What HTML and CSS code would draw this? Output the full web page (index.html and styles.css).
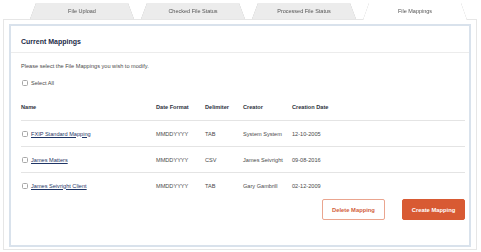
FILE: index.html
```html
<!DOCTYPE html>
<html lang="en">
<head>
    <meta charset="UTF-8">
    <meta name="viewport" content="width=device-width, initial-scale=1.0">
    <title>File Mappings</title>
    <link rel="stylesheet" href="styles.css">
</head>
<body>
    <div class="tabs">
        <div class="tab">File Upload</div>
        <div class="tab">Checked File Status</div>
        <div class="tab">Processed File Status</div>
        <div class="tab active">File Mappings</div>
    </div>
    <div class="outer">
        <div class="panel">
            <div class="panel-head">Current Mappings</div>
            <div class="panel-body">
                <p class="intro">Please select the File Mappings you wish to modify.</p>
                <label class="select-all"><input type="checkbox"> Select All</label>

                <div class="grid head">
                    <div>Name</div>
                    <div>Date Format</div>
                    <div>Delimiter</div>
                    <div>Creator</div>
                    <div>Creation Date</div>
                </div>
                <div class="grid row">
                    <div class="name"><input type="checkbox"> <a href="#">FXIP Standard Mapping</a></div>
                    <div>MMDDYYYY</div>
                    <div>TAB</div>
                    <div>System System</div>
                    <div>12-10-2005</div>
                </div>
                <div class="grid row">
                    <div class="name"><input type="checkbox"> <a href="#">James Matters</a></div>
                    <div>MMDDYYYY</div>
                    <div>CSV</div>
                    <div>James Seivright</div>
                    <div>09-08-2016</div>
                </div>
                <div class="grid row last">
                    <div class="name"><input type="checkbox"> <a href="#">James Seivright Client</a></div>
                    <div>MMDDYYYY</div>
                    <div>TAB</div>
                    <div>Gary Gambrill</div>
                    <div>02-12-2009</div>
                </div>

                <div class="actions">
                    <button class="btn outline">Delete Mapping</button>
                    <button class="btn solid">Create Mapping</button>
                </div>
            </div>
        </div>
    </div>
</body>
</html>
```

FILE: styles.css
```css
body {
    margin: 0;
    font-family: 'Liberation Sans', Arial, sans-serif;
    background: #fff;
    color: #4a4a4a;
    width: 481px;
    height: 252px;
    overflow: hidden;
}
.tabs {
    display: flex;
    gap: 7px;
    padding: 3px 0 0 30px;
    margin-bottom: -1px;
    position: relative;
    z-index: 1;
    filter: drop-shadow(0 0 0.5px rgba(0, 0, 0, 0.3));
}
.tab {
    width: 104px;
    height: 16px;
    background: #ececec;
    clip-path: polygon(6px 0, calc(100% - 6px) 0, 100% 100%, 0 100%);
    font-size: 5.5px;
    line-height: 16px;
    text-align: center;
    color: #555;
}
.tab.active {
    background: #fff;
    height: 17px;
}
.outer {
    margin: 0 4px 0 3px;
    border: 1px solid #e6e6e6;
    padding: 4px 5px 2px;
    height: 223px;
}
.panel {
    border: 2px solid #d9e2ec;
    height: 219px;
}
.panel-head {
    padding: 11px 10px 6px;
    border-bottom: 1px solid #ececec;
    font-size: 7px;
    line-height: 9px;
    font-weight: bold;
    color: #1d2b47;
}
.panel-body {
    padding: 10px 4px 0 10px;
}
.intro {
    margin: 0;
    font-size: 5.6px;
    line-height: 7px;
}
.select-all {
    display: flex;
    align-items: center;
    gap: 3px;
    margin-top: 9px;
    height: 7px;
    font-size: 5.6px;
}
input[type="checkbox"] {
    -webkit-appearance: none;
    appearance: none;
    width: 6px;
    height: 6px;
    margin: 0 0 0 1px;
    border: 0.8px solid #a8a8a8;
    border-radius: 1.5px;
    background: #fff;
}
.grid {
    display: grid;
    grid-template-columns: 135px 49px 38px 49px auto;
    align-items: center;
    font-size: 5.6px;
}
.head {
    margin-top: 17px;
    height: 8px;
    padding-bottom: 9px;
    border-bottom: 1px solid #e4e4e4;
    font-weight: bold;
    color: #2e3340;
}
.row {
    height: 25px;
    border-bottom: 1px solid #e4e4e4;
}
.row.last {
    border-bottom: none;
}
.name {
    display: flex;
    align-items: center;
    gap: 3px;
}
.name a {
    color: #1f3566;
    text-decoration: underline;
}
.actions {
    display: flex;
    justify-content: flex-end;
    gap: 17px;
    margin-top: 1px;
}
.btn {
    width: 63px;
    height: 21px;
    border-radius: 2px;
    font-family: inherit;
    font-size: 5.8px;
    font-weight: bold;
    padding: 0;
}
.outline {
    background: #fff;
    border: 1px solid #eaa58f;
    color: #d2603c;
}
.solid {
    background: #d85a33;
    border: 1px solid #d85a33;
    color: #fff;
}
```
